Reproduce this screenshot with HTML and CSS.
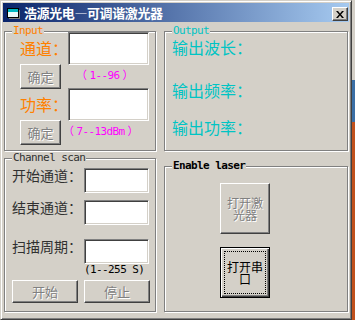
FILE: index.html
```html
<!DOCTYPE html>
<html lang="zh-CN">
<head>
    <meta charset="UTF-8">
    <title>浩源光电—可调谐激光器</title>
    <link rel="stylesheet" href="styles.css">
</head>
<body>
    <div class="window">
        <div class="titlebar">
            <svg class="app-icon" width="16" height="16" viewBox="0 0 16 16">
                <rect x="2.5" y="3.5" width="11" height="9" fill="#e8f8f8" stroke="#000"/>
                <rect x="3" y="4" width="10" height="3" fill="#00b8c0"/>
                <rect x="14" y="5" width="1" height="9" fill="#808080"/>
                <rect x="4" y="13" width="11" height="1" fill="#808080"/>
            </svg>
            <span class="title">浩源光电—可调谐激光器</span>
            <button class="close-btn">
                <svg width="8" height="7" viewBox="0 0 8 7">
                    <path d="M0 0h2l2 2.5L6 0h2L5 3.5 8 7H6L4 4.5 2 7H0l3-3.5z" fill="#000"/>
                </svg>
            </button>
        </div>

        <div class="client">
            <div class="col col-left">
                <div class="group group-input">
                    <div class="legend legend-input">Input</div>
                    <div class="input-body">
                        <div class="row row-field">
                            <span class="big-label orange">通道：</span>
                            <input class="field field-lg" type="text">
                        </div>
                        <div class="row row-btn">
                            <button class="btn btn-ok" disabled>确定</button>
                            <span class="hint hint-ch">（<span class="hint-val">1--96</span>）</span>
                        </div>
                        <div class="row row-field">
                            <span class="big-label orange">功率：</span>
                            <input class="field field-lg" type="text">
                        </div>
                        <div class="row row-btn">
                            <button class="btn btn-ok" disabled>确定</button>
                            <span class="hint hint-pw">（<span class="hint-val">7--13dBm</span>）</span>
                        </div>
                    </div>
                </div>

                <div class="group group-scan">
                    <div class="legend legend-scan">Channel scan</div>
                    <div class="scan-body">
                        <div class="scan-row scan-first">
                            <span class="scan-label">开始通道：</span>
                            <input class="field field-sm" type="text">
                        </div>
                        <div class="scan-row scan-second">
                            <span class="scan-label">结束通道：</span>
                            <input class="field field-sm" type="text">
                        </div>
                        <div class="scan-row scan-third">
                            <span class="scan-label">扫描周期：</span>
                            <input class="field field-sm" type="text">
                        </div>
                        <div class="period-hint">(1--255 S)</div>
                        <div class="scan-buttons">
                            <button class="btn btn-scan" disabled>开始</button>
                            <button class="btn btn-scan" disabled>停止</button>
                        </div>
                    </div>
                </div>
            </div>

            <div class="col col-right">
                <div class="group group-output">
                    <div class="legend legend-output">Output</div>
                    <div class="output-body">
                        <div class="out-label out-first">输出波长：</div>
                        <div class="out-label out-second">输出频率：</div>
                        <div class="out-label out-third">输出功率：</div>
                    </div>
                </div>

                <div class="group group-laser">
                    <div class="legend legend-laser">Enable laser</div>
                    <div class="laser-body">
                        <button class="btn btn-big btn-laser" disabled>打开激光器</button>
                        <button class="btn btn-big btn-default">打开串口</button>
                    </div>
                </div>
            </div>
        </div>
    </div>
</body>
</html>
```

FILE: styles.css
```css
body {
    margin: 0;
    font-family: "Noto Sans CJK SC", sans-serif;
    background: linear-gradient(to bottom, #d4d0c8 0, #d4d0c8 80px, #3a6ea5 80px, #3a6ea5 122px, #c0501c 122px);
}
.window {
    width: 352px;
    height: 320px;
    box-sizing: border-box;
    background: #d4d0c8;
    border: 1px solid;
    border-color: #d4d0c8 #404040 #404040 #d4d0c8;
    box-shadow: inset 1px 1px 0 #fff, inset -1px -1px 0 #808080;
    padding: 2px;
    display: flex;
    flex-direction: column;
}
.titlebar {
    height: 19px;
    flex-shrink: 0;
    display: flex;
    align-items: center;
    padding-left: 2px;
    background: linear-gradient(to right, #0a246a, #a6caf0);
}
.app-icon {
    flex-shrink: 0;
}
.title {
    margin-left: 3px;
    color: #fff;
    font-weight: bold;
    font-size: 13px;
    letter-spacing: -0.4px;
    line-height: 19px;
}
.close-btn {
    margin-left: auto;
    margin-right: 1px;
    align-self: flex-end;
    margin-bottom: 1px;
    width: 16px;
    height: 14px;
    padding: 0;
    box-sizing: border-box;
    background: #d4d0c8;
    border: 1px solid;
    border-color: #fff #404040 #404040 #fff;
    box-shadow: inset -1px -1px 0 #808080;
    display: flex;
    align-items: center;
    justify-content: center;
}
.client {
    flex: 1;
    display: flex;
    gap: 8px;
    padding-left: 1px;
}
.col-left {
    width: 152px;
}
.col-right {
    width: 184px;
}
.group {
    box-sizing: border-box;
    border: 1px solid #808080;
    box-shadow: inset 1px 1px 0 #fff, 1px 1px 0 #fff;
}
.group-input {
    margin-top: 9px;
    height: 120px;
}
.group-scan {
    margin-top: 7px;
    height: 154px;
}
.group-output {
    margin-top: 9px;
    height: 120px;
}
.group-laser {
    margin-top: 15px;
    height: 146px;
}
.legend {
    display: table;
    height: 12px;
    margin: -7px 0 -5px 7px;
    padding: 0 1px;
    background: #d4d0c8;
    font-family: "DejaVu Sans Mono", monospace;
    font-size: 11px;
    letter-spacing: -0.6px;
    line-height: 12px;
    position: relative;
}
.legend-input {
    color: #ff8000;
}
.legend-output {
    color: #00c4c4;
}
.legend-scan {
    color: #303030;
}
.legend-laser {
    color: #000;
    font-weight: bold;
}

/* input box */
.input-body {
    padding-left: 15px;
}
.row {
    display: flex;
    align-items: flex-start;
}
.row-field {
    height: 32px;
}
.row-btn {
    height: 24px;
}
.big-label {
    width: 48px;
    font-size: 16px;
    line-height: 32px;
}
.orange {
    color: #ff8000;
}
.field {
    box-sizing: border-box;
    margin: 0;
    padding: 0;
    background: #fff;
    border: 1px solid;
    border-color: #808080 #fff #fff #808080;
    box-shadow: inset 1px 1px 0 #404040, inset -1px -1px 0 #d4d0c8;
}
.field-lg {
    width: 81px;
    height: 33px;
}
.btn {
    box-sizing: border-box;
    margin: 0;
    padding: 0;
    background: #d4d0c8;
    border: 1px solid;
    border-color: #fff #404040 #404040 #fff;
    box-shadow: inset -1px -1px 0 #808080;
    font-family: "Noto Sans CJK SC", sans-serif;
    font-size: 13px;
    color: #000;
}
.btn:disabled {
    color: #808080;
    text-shadow: 1px 1px 0 #fff;
}
.btn-ok {
    width: 41px;
    height: 25px;
}
.hint {
    color: #ff00ff;
    font-family: "DejaVu Sans Mono", "Noto Sans CJK SC", monospace;
    font-size: 11px;
    letter-spacing: -0.6px;
    line-height: 24px;
}
.hint-val {
    margin: 0 3px;
}
.hint-ch {
    margin-left: 15px;
}
.hint-pw {
    margin-left: 2px;
}

/* channel scan */
.scan-body {
    padding-left: 7px;
}
.scan-row {
    display: flex;
    align-items: flex-start;
}
.scan-first {
    margin-top: 9px;
}
.scan-second {
    margin-top: 7px;
}
.scan-third {
    margin-top: 14px;
}
.scan-label {
    width: 72px;
    font-size: 14px;
    line-height: 15px;
    color: #303030;
}
.field-sm {
    width: 65px;
    height: 25px;
}
.period-hint {
    margin-left: 72px;
    font-family: "DejaVu Sans Mono", monospace;
    font-size: 11px;
    letter-spacing: -0.6px;
    line-height: 12px;
    color: #000;
}
.scan-buttons {
    display: flex;
    gap: 6px;
    margin-top: 4px;
}
.btn-scan {
    width: 66px;
    height: 23px;
}

/* output box */
.output-body {
    padding-left: 7px;
}
.out-label {
    color: #00c4c4;
    font-size: 16px;
    line-height: 18px;
}
.out-first {
    margin-top: 6px;
}
.out-second {
    margin-top: 25px;
}
.out-third {
    margin-top: 19px;
}

/* enable laser */
.laser-body {
    padding-left: 55px;
    display: flex;
    flex-direction: column;
    align-items: flex-start;
}
.btn-big {
    width: 50px;
    height: 51px;
    padding: 0 3px;
    font-size: 12px;
    line-height: 12px;
}
.btn-laser {
    margin-top: 16px;
}
.btn-default {
    margin-top: 13px;
    border: 1px solid #000;
    box-shadow: inset 1px 1px 0 #fff, inset -1px -1px 0 #404040, inset -2px -2px 0 #808080;
    outline: 1px dotted #000;
    outline-offset: -5px;
}
```
